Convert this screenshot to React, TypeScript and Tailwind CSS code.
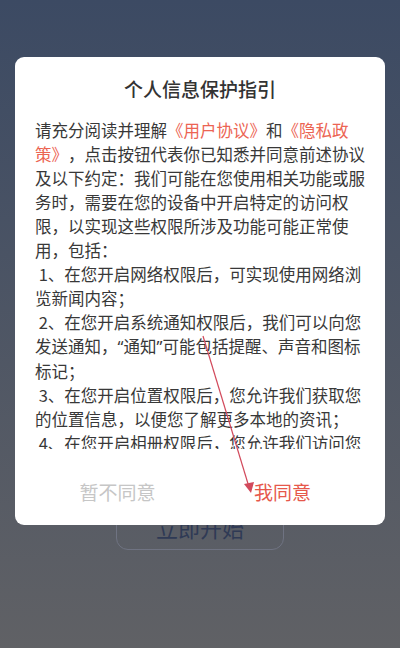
const FONT = { fontFamily: '"Noto Sans CJK SC", "Noto Sans", sans-serif' };

const Link = ({ children }: { children: React.ReactNode }) => (
  <span className="text-[#ec6453]">{children}</span>
);

// narrow (latin) quote marks, as on the device
const Q = ({ children }: { children: string }) => (
  <span style={{ fontFamily: '"Noto Sans", sans-serif' }}>{children}</span>
);

const lines: React.ReactNode[] = [
  <>
    请充分阅读并理解<Link>《用户协议》</Link>和<Link>《隐私政</Link>
  </>,
  <>
    <Link>策》</Link>，点击按钮代表你已知悉并同意前述协议
  </>,
  '及以下约定：我们可能在您使用相关功能或服',
  '务时，需要在您的设备中开启特定的访问权',
  '限，以实现这些权限所涉及功能可能正常使',
  '用，包括：',
  '\u00a01、在您开启网络权限后，可实现使用网络浏',
  '览新闻内容；',
  '\u00a02、在您开启系统通知权限后，我们可以向您',
  <>
    发送通知，<Q>“</Q>通知<Q>”</Q>可能包括提醒、声音和图标
  </>,
  '标记；',
  '\u00a03、在您开启位置权限后，您允许我们获取您',
  '的位置信息，以便您了解更多本地的资讯；',
  '\u00a04、在您开启相册权限后，您允许我们访问您',
  '的相册，以便您上传图片；',
];

export default function App() {
  return (
    <div
      lang="zh-CN"
      className="relative h-[648px] w-[400px] overflow-hidden bg-gradient-to-b from-[#3c4a63] to-[#606165] [text-spacing-trim:space-all]"
      style={FONT}
    >
      {/* page behind the dialog */}
      <div className="flex flex-col items-center pt-[504px]">
        <div className="flex h-[46px] w-[168px] items-center justify-center rounded-[12px] border border-[#6f7382] text-[22px] text-[#2f3a55]">
          立即开始
        </div>
      </div>

      {/* dialog */}
      <div className="absolute left-[15px] top-[57px] flex h-[468px] w-[370px] flex-col rounded-[9px] bg-white">
        <h2 className="pt-[20px] text-center text-[19px] font-medium leading-[24px] text-[#333333]">
          个人信息保护指引
        </h2>
        <div className="mt-[17px] h-[331px] overflow-hidden px-[20px] text-[16.5px] leading-[24px] text-[#383838]">
          {lines.map((line, i) => (
            <div key={i} className="whitespace-nowrap">
              {line}
            </div>
          ))}
        </div>
        <div className="mt-[19px] flex h-[48px] px-[20px] text-[19px]">
          <button className="flex-1 text-[#c6c6c6]">暂不同意</button>
          <button className="flex-1 text-[#e6584b]">我同意</button>
        </div>
      </div>

      {/* annotation arrow */}
      <svg
        className="pointer-events-none absolute left-0 top-0"
        width="400"
        height="648"
        viewBox="0 0 400 648"
      >
        <line x1="203" y1="336" x2="249" y2="487" stroke="#d24a5c" strokeWidth="1.2" />
        <polygon points="251,493 244,484 254,482" fill="#d24a5c" />
      </svg>
    </div>
  );
}
